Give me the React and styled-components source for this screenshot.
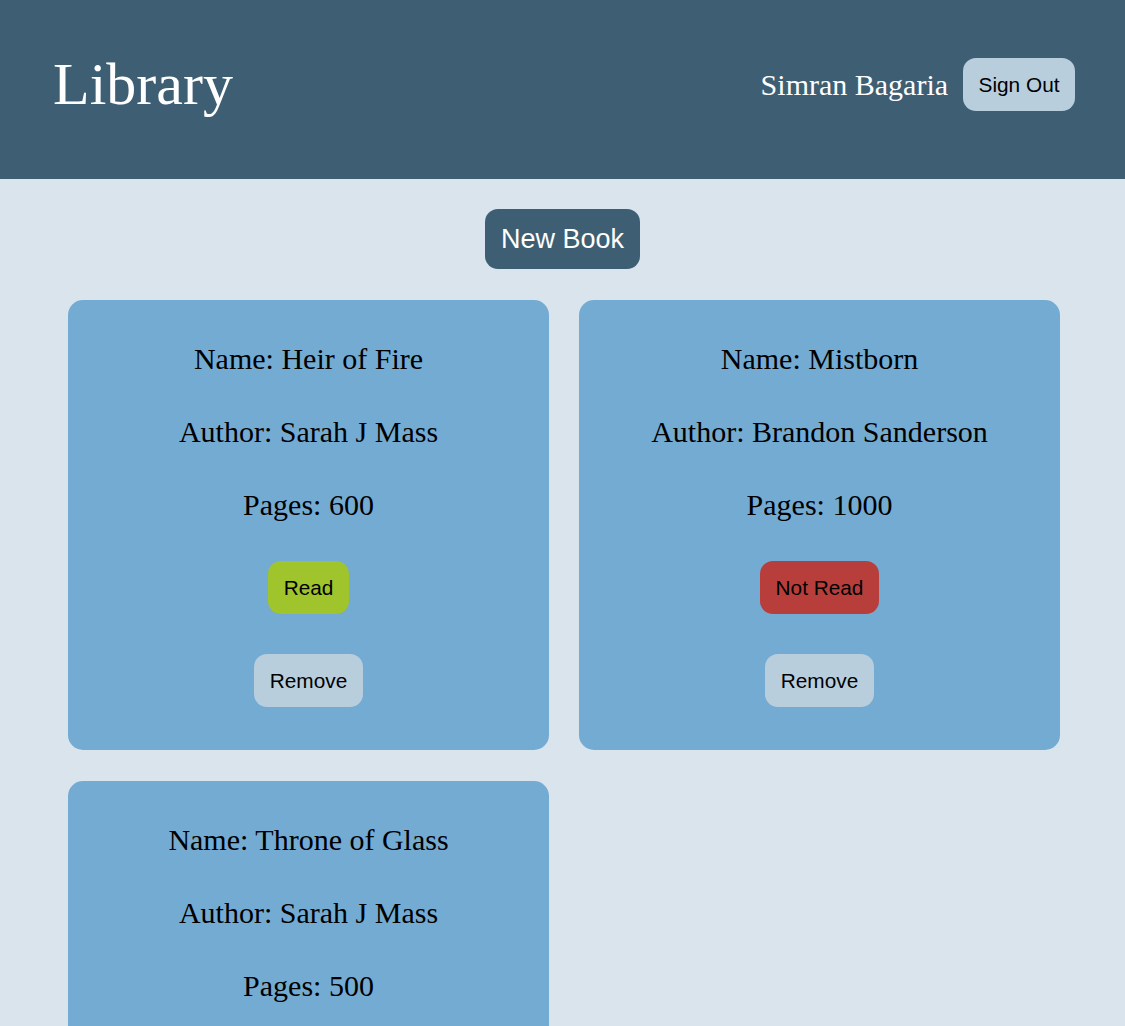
import React from "react";
import styled, { createGlobalStyle } from "styled-components";

const Global = createGlobalStyle`
  html, body { margin: 0; padding: 0; }
  body {
    background: #dae4ed;
    font-family: "Liberation Serif", "Times New Roman", serif;
  }
`;

const Header = styled.header`
  height: 179px;
  background: #3e5e74;
  display: flex;
  align-items: center;
  justify-content: space-between;
  padding: 0 50px 10px 53px;
  box-sizing: border-box;
`;

const Title = styled.h1`
  margin: 0;
  font-family: "Liberation Serif", serif;
  font-weight: normal;
  font-size: 60px;
  color: #ffffff;
  line-height: 1;
  padding-bottom: 2px;
`;

const UserArea = styled.div`
  display: flex;
  align-items: center;
  gap: 15px;
`;

const UserName = styled.span`
  font-family: "Liberation Serif", serif;
  font-size: 30px;
  color: #ffffff;
`;

const Button = styled.button`
  border: none;
  font-family: "Liberation Sans", Arial, sans-serif;
  font-size: ${(p) => p.$size || 20.8}px;
  line-height: ${(p) => p.$lh || 24}px;
  padding: ${(p) => p.$pad || "14.5px 16px"};
  border-radius: 13px;
  background: ${(p) => p.$bg || "#b9cedd"};
  color: ${(p) => p.$color || "#000000"};
  cursor: pointer;
`;

const Main = styled.main`
  display: flex;
  flex-direction: column;
  align-items: center;
  padding-top: 30px;
  gap: 31px;
`;

const Grid = styled.div`
  display: grid;
  grid-template-columns: repeat(2, 481px);
  gap: 31px 30px;
  align-self: flex-start;
  margin-left: 68px;
`;

const Card = styled.div`
  background: #74abd3;
  border-radius: 15px;
  display: flex;
  flex-direction: column;
  align-items: center;
  gap: 40px;
  padding: 42px 20px 43px;
`;

const Line = styled.div`
  font-family: "Liberation Serif", serif;
  font-size: 30px;
  line-height: 33px;
  color: #000000;
`;

const books = [
  { name: "Heir of Fire", author: "Sarah J Mass", pages: 600, read: true },
  { name: "Mistborn", author: "Brandon Sanderson", pages: 1000, read: false },
  { name: "Throne of Glass", author: "Sarah J Mass", pages: 500, read: true },
];

export default function App() {
  return (
    <>
      <Global />
      <Header>
        <Title>Library</Title>
        <UserArea>
          <UserName>Simran Bagaria</UserName>
          <Button $pad="14.5px 15.5px">Sign Out</Button>
        </UserArea>
      </Header>
      <Main>
        <Button $size={27} $lh={32} $pad="14px 15.5px" $bg="#3e5e74" $color="#ffffff">
          New Book
        </Button>
        <Grid>
          {books.map((b) => (
            <Card key={b.name}>
              <Line>Name: {b.name}</Line>
              <Line>Author: {b.author}</Line>
              <Line>Pages: {b.pages}</Line>
              <Button $bg={b.read ? "#a0c42b" : "#b83e3c"}>
                {b.read ? "Read" : "Not Read"}
              </Button>
              <Button>Remove</Button>
            </Card>
          ))}
        </Grid>
      </Main>
    </>
  );
}
